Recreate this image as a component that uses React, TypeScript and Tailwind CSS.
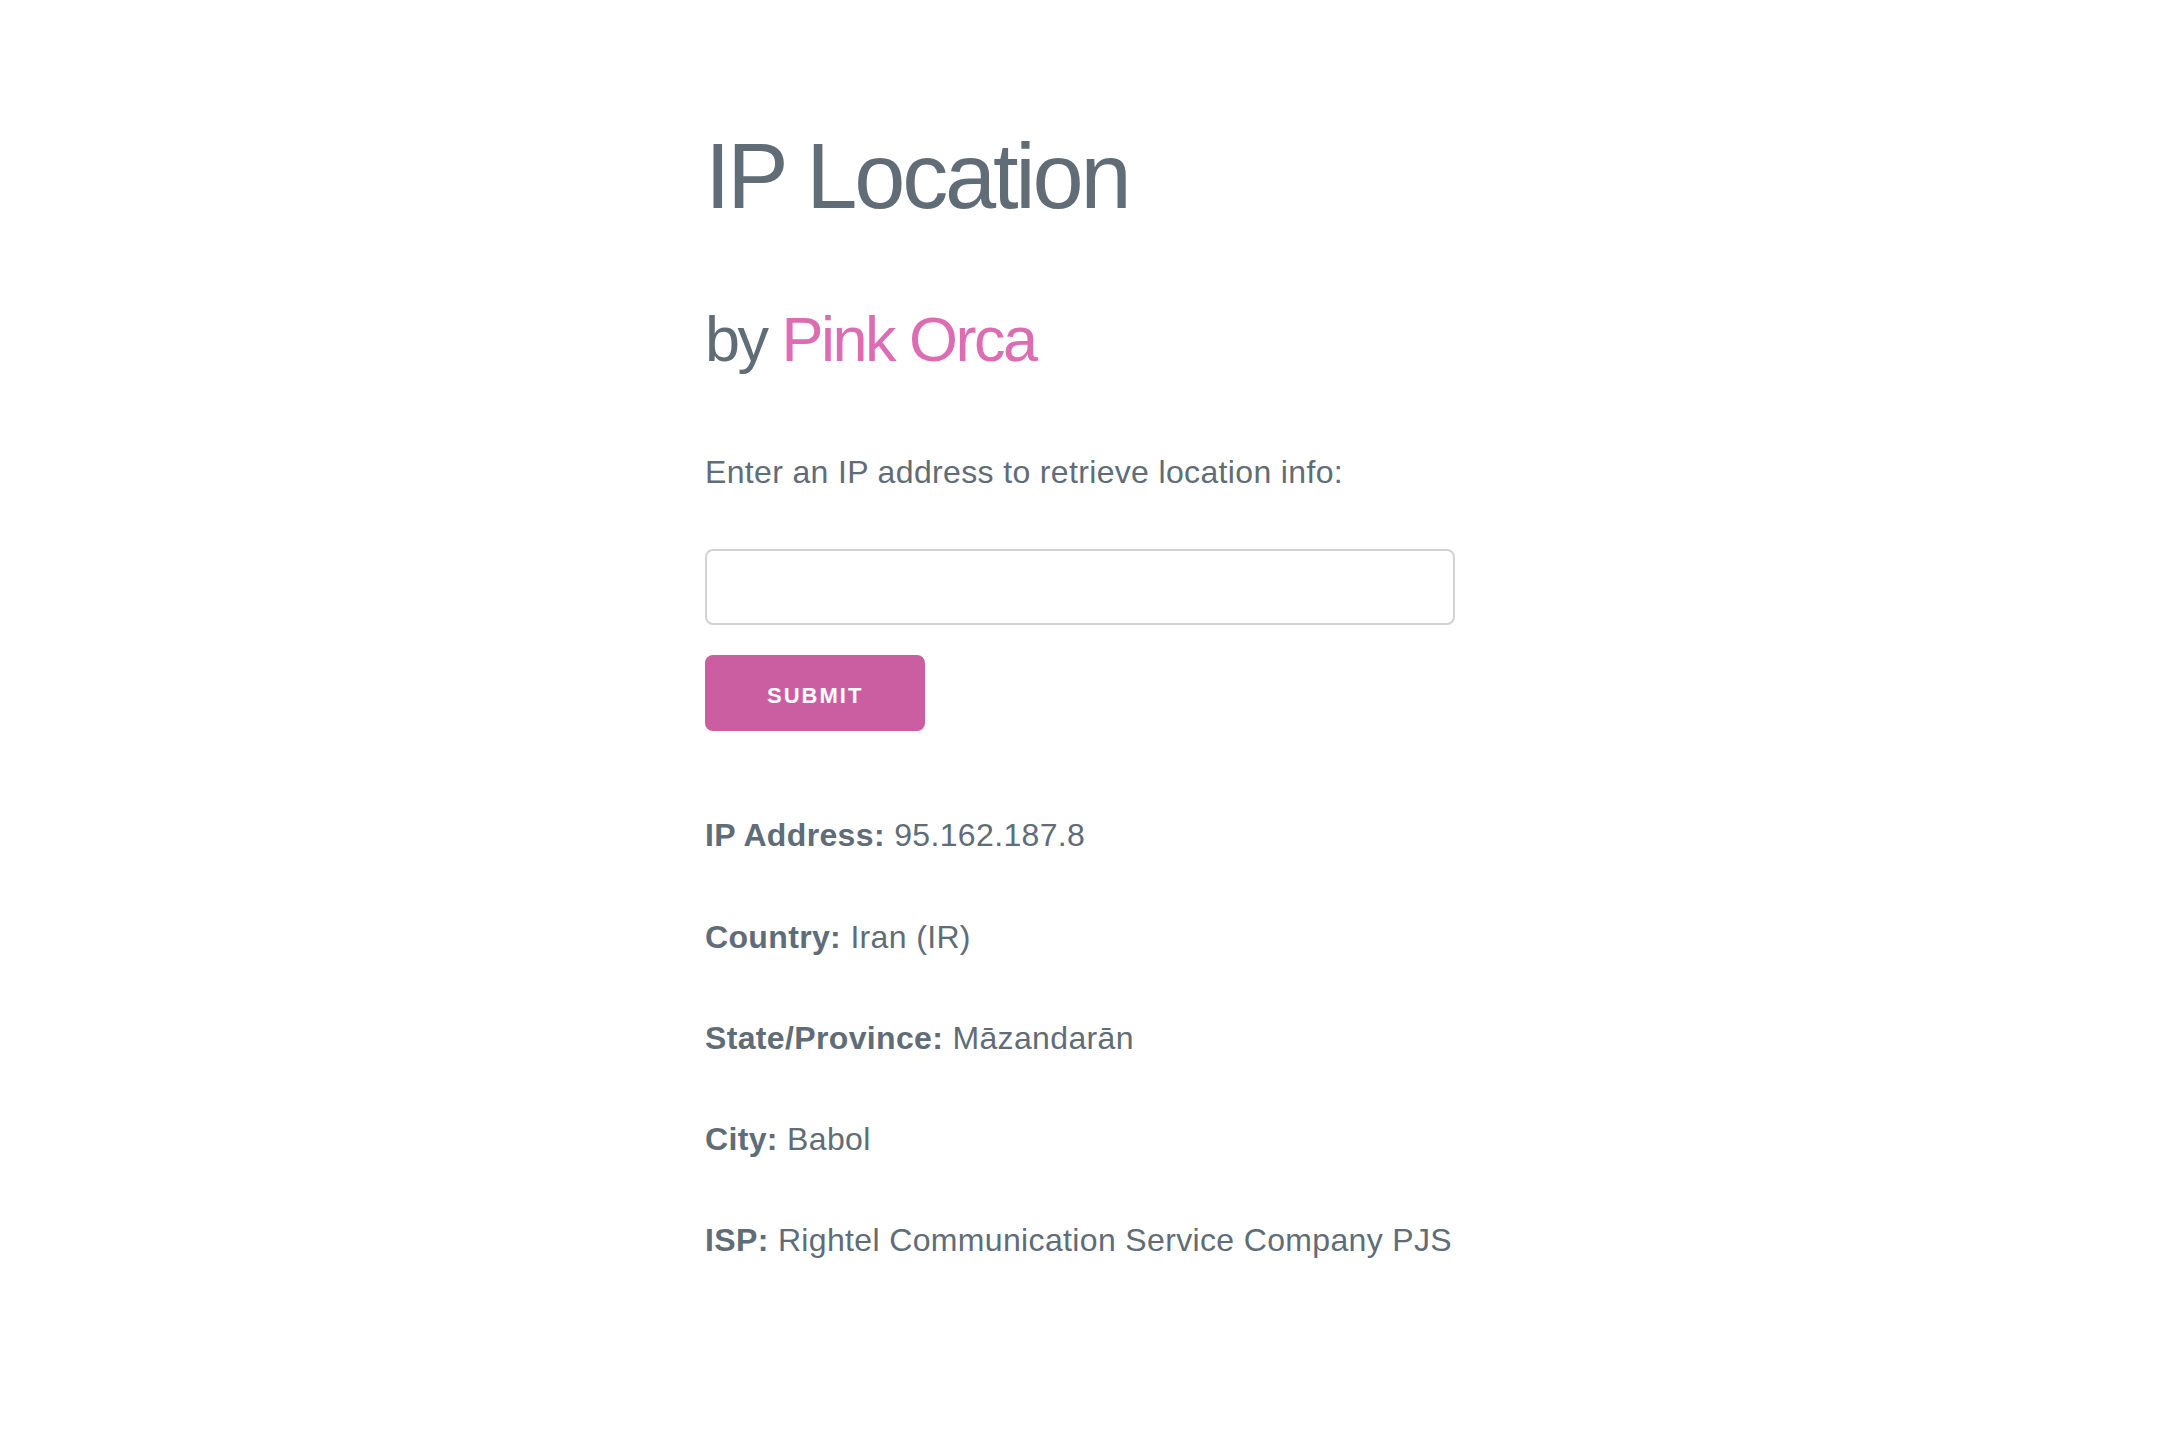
import React from "react";

const rows: { label: string; value: string }[] = [
  { label: "IP Address:", value: "95.162.187.8" },
  { label: "Country:", value: "Iran (IR)" },
  { label: "State/Province:", value: "Māzandarān" },
  { label: "City:", value: "Babol" },
  { label: "ISP:", value: "Rightel Communication Service Company PJS" },
];

export default function App() {
  return (
    <div className="min-h-screen bg-white font-['Liberation_Sans',Arial,sans-serif] text-[#606c76] tracking-[0.35px]">
      <div className="mx-auto w-[750px] pt-[121px]">
        <h1 className="m-0 text-[92px] font-normal leading-[1.2] tracking-[-3.2px]">IP Location</h1>
        <h2 className="mt-[69px] text-[63px] font-normal leading-[1.25] tracking-[-2.5px]">
          by <span className="text-[#dc6db3]">Pink Orca</span>
        </h2>
        <p className="mt-[68px] whitespace-nowrap text-[32px] leading-[1.6]">Enter an IP address to retrieve location info:</p>
        <input
          type="text"
          className="mt-[51px] block h-[76px] w-full rounded-[8px] border-2 border-[#d1d1d1] bg-transparent px-[20px] text-[32px] outline-none"
        />
        <button
          type="button"
          className="mt-[30px] block h-[76px] rounded-[8px] border-2 border-[#cb5ea1] bg-[#cb5ea1] px-[60px] pt-[5px] text-[22px] font-bold uppercase leading-[67px] tracking-[2px] text-white"
        >
          Submit
        </button>
        <div className="mt-[79px]">
          {rows.map((r) => (
            <p key={r.label} className="mb-[50px] whitespace-nowrap text-[32px] leading-[1.6]">
              <strong className="font-bold">{r.label}</strong> {r.value}
            </p>
          ))}
        </div>
      </div>
    </div>
  );
}
